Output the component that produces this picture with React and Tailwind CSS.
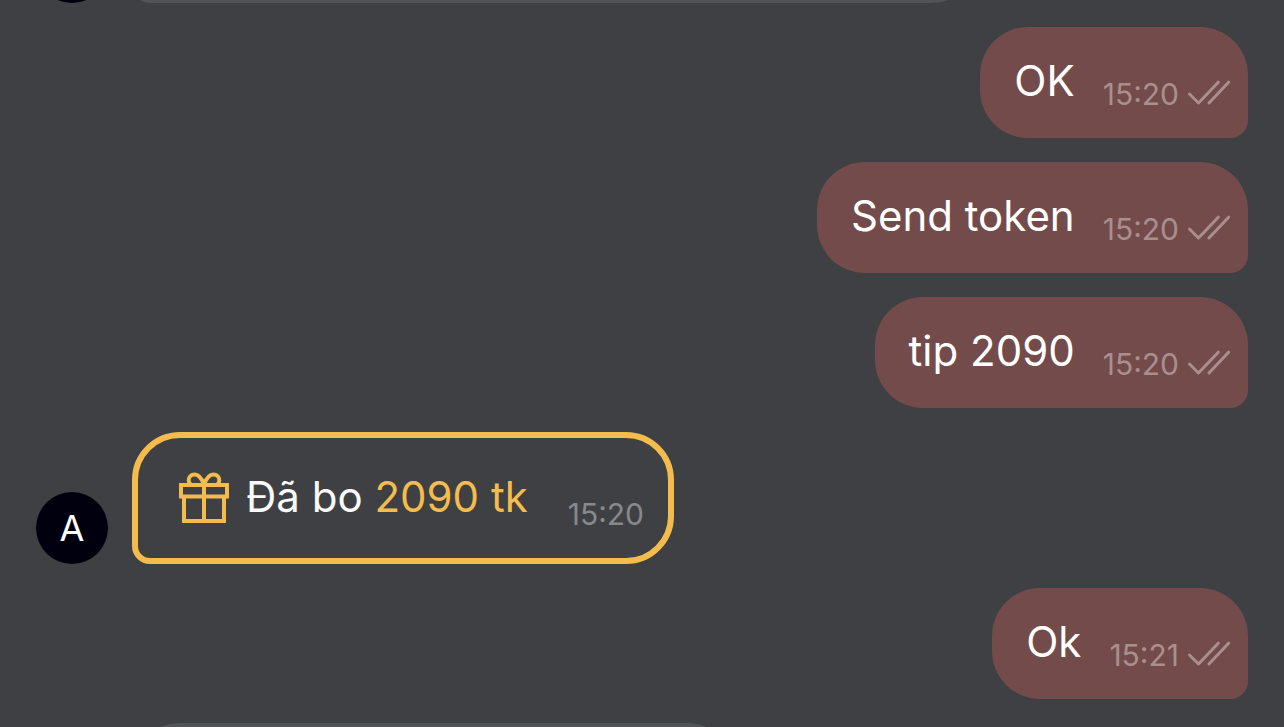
import React from "react";

function DoubleCheck() {
  return (
    <svg
      className="h-[34px] w-[44px] shrink-0"
      viewBox="0 0 44 34"
      fill="none"
      stroke="currentColor"
      strokeWidth="3"
      strokeLinecap="round"
      strokeLinejoin="round"
      aria-label="Read"
    >
      <path d="M2.5 17L11.5 26L31.3 5.2" />
      <path d="M22 26L41.6 5.2" />
    </svg>
  );
}

function GiftIcon() {
  return (
    <svg
      className="h-[52px] w-[52px] shrink-0"
      viewBox="0 0 52 52"
      fill="none"
      stroke="currentColor"
      strokeWidth="4"
      aria-hidden="true"
    >
      <path d="M3 14H49V25.5H3Z" />
      <path d="M6 25.5V50H46V25.5" />
      <path d="M26 14V50" />
      <path d="M26 13.5C23.5 7 20.5 3.6 16.7 3.6C13 3.6 10.7 6.2 10.7 9.2C10.7 11.2 11.6 12.8 13.2 14" />
      <path d="M26 13.5C28.5 7 31.5 3.6 35.3 3.6C39 3.6 41.3 6.2 41.3 9.2C41.3 11.2 40.4 12.8 38.8 14" />
    </svg>
  );
}

function Avatar({ letter }) {
  return (
    <div className="flex size-[72px] shrink-0 items-center justify-center rounded-full bg-[#00000f] text-[36px]">
      {letter}
    </div>
  );
}

function Sent({ text, time }) {
  return (
    <div className="flex items-end gap-7 self-end rounded-[48px] rounded-br-[18px] bg-[#734b4b] pt-6 pr-[17px] pb-[27px] pl-[34px]">
      <p className="text-[42px] leading-[60px]">{text}</p>
      <div className="flex items-end gap-2 text-[#a98f8e]">
        <time className="text-[30px] leading-[34px]">{time}</time>
        <DoubleCheck />
      </div>
    </div>
  );
}

function Tip({ amount, time }) {
  return (
    <div className="flex items-end gap-6">
      <Avatar letter="A" />
      <div className="flex items-end gap-10 rounded-[48px] rounded-bl-[18px] border-[6px] border-[#f3bc4c] pt-[25px] pr-6 pb-[27px] pl-10">
        <div className="flex items-center gap-4 text-[#f3bc4c]">
          <GiftIcon />
          <p className="text-[42px] leading-[68px]">
            <span className="text-[#fafafc]">Đã bo</span> {amount} tk
          </p>
        </div>
        <time className="text-[30px] leading-[34px] text-[#88898b]">
          {time}
        </time>
      </div>
    </div>
  );
}

export default function App() {
  return (
    <main className="flex h-screen flex-col gap-6 overflow-hidden bg-[#3f4043] px-9 font-['Inter',sans-serif] text-white">
      {/* older message, scrolled out at the top */}
      <div className="-mt-[108px] flex shrink-0 items-end gap-6">
        <Avatar />
        <div className="h-[111px] w-[848px] rounded-[48px] rounded-bl-[18px] bg-[#525257]" />
      </div>
      <Sent text="OK" time="15:20" />
      <Sent text="Send token" time="15:20" />
      <Sent text="tip 2090" time="15:20" />
      <Tip amount={2090} time="15:20" />
      <Sent text="Ok" time="15:21" />
      {/* next message, still below the fold */}
      <div className="flex shrink-0 items-end gap-6">
        <Avatar />
        <div className="h-[111px] w-[603px] rounded-[48px] rounded-bl-[18px] bg-[#525257]" />
      </div>
    </main>
  );
}
